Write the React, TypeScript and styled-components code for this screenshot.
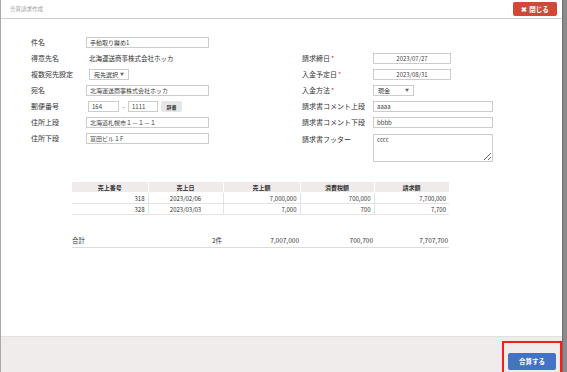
import React from "react";
import styled, { createGlobalStyle } from "styled-components";

const Global = createGlobalStyle`
  html, body { margin: 0; padding: 0; }
  body {
    font-family: "Noto Sans CJK JP", "Noto Sans", "Liberation Sans", sans-serif;
    color: #333;
  }
  * { box-sizing: border-box; }
`;

const Page = styled.div`
  display: flex;
  width: 567px;
  height: 372px;
  background: #8a8a8a;
`;

const Modal = styled.div`
  width: 563px;
  height: 372px;
  background: #fff;
  border-left: 1px solid #a9a9a9;
  border-right: 1px solid #6f6f6f;
  display: flex;
  flex-direction: column;
`;

const Header = styled.div`
  height: 19px;
  flex: none;
  border-bottom: 1px solid #cfcfcf;
  display: flex;
  align-items: center;
  justify-content: space-between;
  padding: 0 5px 0 9px;
`;

const Title = styled.div`
  font-size: 5.5px;
  color: #a0a0a0;
`;

const CloseButton = styled.button`
  width: 44px;
  height: 14px;
  margin-top: -1px;
  border: none;
  border-radius: 2px;
  background: #d14836;
  color: #fff;
  font-family: inherit;
  font-size: 6.5px;
  font-weight: bold;
  padding: 0;
  display: flex;
  align-items: center;
  justify-content: center;
  gap: 2px;
`;

const Body = styled.div`
  flex: 1;
  padding: 15px 0 0 30px;
`;

const FormGrid = styled.div`
  display: grid;
  grid-template-columns: 271px 1fr;
`;

const Column = styled.div<{ $offset?: number }>`
  display: flex;
  flex-direction: column;
  padding-top: ${(p) => p.$offset ?? 0}px;
`;

const Row = styled.div<{ $top?: boolean }>`
  display: flex;
  align-items: ${(p) => (p.$top ? "flex-start" : "center")};
  height: ${(p) => (p.$top ? "auto" : "16px")};
  padding-top: ${(p) => (p.$top ? "4px" : "0")};
`;

const Label = styled.div<{ $w: number }>`
  width: ${(p) => p.$w}px;
  flex: none;
  font-size: 7px;
  line-height: 10px;
  color: #333;
  white-space: nowrap;
`;

const Req = styled.span`
  color: #e03030;
  margin-left: 1px;
`;

const Value = styled.div`
  font-size: 6.5px;
  color: #333;
  padding-left: 3px;
`;

const Input = styled.div<{ $w: number; $center?: boolean; $ml?: number }>`
  width: ${(p) => p.$w}px;
  height: 11px;
  margin-left: ${(p) => p.$ml ?? 0}px;
  border: 1px solid #cccccc;
  background: #fff;
  font-size: 6px;
  line-height: 9px;
  padding: 0 3px;
  color: #444;
  text-align: ${(p) => (p.$center ? "center" : "left")};
  white-space: nowrap;
  overflow: hidden;
`;

const Select = styled.div<{ $w: number; $ml?: number }>`
  width: ${(p) => p.$w}px;
  height: 11px;
  margin-left: ${(p) => p.$ml ?? 0}px;
  border: 1px solid #cccccc;
  background: #fff;
  font-size: 6px;
  line-height: 9px;
  padding: 0 4px;
  display: flex;
  align-items: center;
  justify-content: space-between;
  color: #333;
`;

const Caret = styled.span`
  font-size: 4px;
  color: #666;
`;

const Dash = styled.span`
  font-size: 6px;
  width: 9px;
  text-align: center;
`;

const SmallButton = styled.div`
  width: 21px;
  height: 11px;
  margin-left: 3px;
  background: #e6e6e6;
  border-radius: 2px;
  font-size: 5px;
  font-weight: bold;
  color: #333;
  display: flex;
  align-items: center;
  justify-content: center;
`;

const TextArea = styled.textarea`
  width: 120px;
  height: 28px;
  border: 1px solid #cccccc;
  font-family: inherit;
  font-size: 6px;
  line-height: 8px;
  padding: 1px 3px;
  color: #444;
  resize: both;
  display: block;
`;

const Table = styled.table`
  margin: 19px 0 0 41px;
  width: 377px;
  border-collapse: collapse;
  table-layout: fixed;
  font-size: 6px;
`;

const Th = styled.th`
  background: #efebea;
  height: 11px;
  padding: 0;
  font-weight: bold;
  color: #333;
  border: 1px solid #fff;
  border-left: 1px solid #e0dddd;
  line-height: 9px;
  &:first-child { border-left: none; }
`;

const Td = styled.td<{ $align?: string }>`
  height: 11px;
  padding: 0 3px;
  line-height: 9px;
  text-align: ${(p) => p.$align ?? "right"};
  border-bottom: 1px solid #e3e3e3;
  border-left: 1px solid #e3e3e3;
  color: #333;
  &:first-child { border-left: none; }
`;

const Totals = styled.div`
  margin: 17px 0 0 41px;
  width: 377px;
  height: 16px;
  display: grid;
  grid-template-columns: 76px 75px 77px 74px 75px;
  align-items: center;
  font-size: 6.5px;
  border-bottom: 1px solid #dcdcdc;
`;

const TotalCell = styled.div<{ $align?: string }>`
  text-align: ${(p) => p.$align ?? "right"};
  padding: 0 1px 0 0;
`;

const Footer = styled.div`
  height: 36px;
  flex: none;
  background: #efeceb;
  border-top: 1px solid #e3e0df;
  display: flex;
  justify-content: flex-end;
  align-items: flex-start;
  padding: 4px 0 0 0;
`;

const Highlight = styled.div`
  border: 2px solid #ff1a1a;
  padding: 2px 4px 4px 4px;
`;

const MergeButton = styled.button`
  width: 48px;
  height: 17px;
  border: none;
  border-radius: 2px;
  background: #4472c4;
  color: #fff;
  font-family: inherit;
  font-size: 6.5px;
  font-weight: bold;
  padding: 0;
`;

const rows = [
  { no: "318", date: "2023/02/06", sales: "7,000,000", tax: "700,000", total: "7,700,000" },
  { no: "328", date: "2023/03/03", sales: "7,000", tax: "700", total: "7,700" },
];

export default function App() {
  return (
    <>
      <Global />
      <Page>
        <Modal>
          <Header>
            <Title>合算請求作成</Title>
            <CloseButton>
              <span>✖</span>
              <span>閉じる</span>
            </CloseButton>
          </Header>
          <Body>
            <FormGrid>
              <Column>
                <Row>
                  <Label $w={55}>件名</Label>
                  <Input $w={123}>手動取り纏め1</Input>
                </Row>
                <Row>
                  <Label $w={55}>得意先名</Label>
                  <Value>北海運送商事株式会社ホッカ</Value>
                </Row>
                <Row>
                  <Label $w={55}>複数宛先設定</Label>
                  <Select $w={40} $ml={3}>
                    <span>宛先選択</span>
                    <Caret>▼</Caret>
                  </Select>
                </Row>
                <Row>
                  <Label $w={55}>宛名</Label>
                  <Input $w={123}>北海運送商事株式会社ホッカ</Input>
                </Row>
                <Row>
                  <Label $w={55}>郵便番号</Label>
                  <Input $w={31} $ml={2}>164</Input>
                  <Dash>-</Dash>
                  <Input $w={30}>1111</Input>
                  <SmallButton>辞書</SmallButton>
                </Row>
                <Row>
                  <Label $w={55}>住所上段</Label>
                  <Input $w={123}>北海道札幌市１－１－１</Input>
                </Row>
                <Row>
                  <Label $w={55}>住所下段</Label>
                  <Input $w={123}>富田ビル１F</Input>
                </Row>
              </Column>
              <Column $offset={16}>
                <Row>
                  <Label $w={71}>
                    請求締日<Req>*</Req>
                  </Label>
                  <Input $w={78} $center>2023/07/27</Input>
                </Row>
                <Row>
                  <Label $w={71}>
                    入金予定日<Req>*</Req>
                  </Label>
                  <Input $w={78} $center>2023/08/31</Input>
                </Row>
                <Row>
                  <Label $w={71}>
                    入金方法<Req>*</Req>
                  </Label>
                  <Select $w={41}>
                    <span>現金</span>
                    <Caret>▼</Caret>
                  </Select>
                </Row>
                <Row>
                  <Label $w={71}>請求書コメント上段</Label>
                  <Input $w={120}>aaaa</Input>
                </Row>
                <Row>
                  <Label $w={71}>請求書コメント下段</Label>
                  <Input $w={120}>bbbb</Input>
                </Row>
                <Row $top>
                  <Label $w={71}>請求書フッター</Label>
                  <TextArea defaultValue="cccc" />
                </Row>
              </Column>
            </FormGrid>
            <Table>
              <colgroup>
                <col style={{ width: 76 }} />
                <col style={{ width: 75 }} />
                <col style={{ width: 77 }} />
                <col style={{ width: 74 }} />
                <col style={{ width: 75 }} />
              </colgroup>
              <thead>
                <tr>
                  <Th>売上番号</Th>
                  <Th>売上日</Th>
                  <Th>売上額</Th>
                  <Th>消費税額</Th>
                  <Th>請求額</Th>
                </tr>
              </thead>
              <tbody>
                {rows.map((r) => (
                  <tr key={r.no}>
                    <Td>{r.no}</Td>
                    <Td $align="center">{r.date}</Td>
                    <Td>{r.sales}</Td>
                    <Td>{r.tax}</Td>
                    <Td>{r.total}</Td>
                  </tr>
                ))}
              </tbody>
            </Table>
            <Totals>
              <TotalCell $align="left">合計</TotalCell>
              <TotalCell>2件</TotalCell>
              <TotalCell>7,007,000</TotalCell>
              <TotalCell>700,700</TotalCell>
              <TotalCell>7,707,700</TotalCell>
            </Totals>
          </Body>
          <Footer>
            <Highlight>
              <MergeButton>合算する</MergeButton>
            </Highlight>
          </Footer>
        </Modal>
      </Page>
    </>
  );
}
